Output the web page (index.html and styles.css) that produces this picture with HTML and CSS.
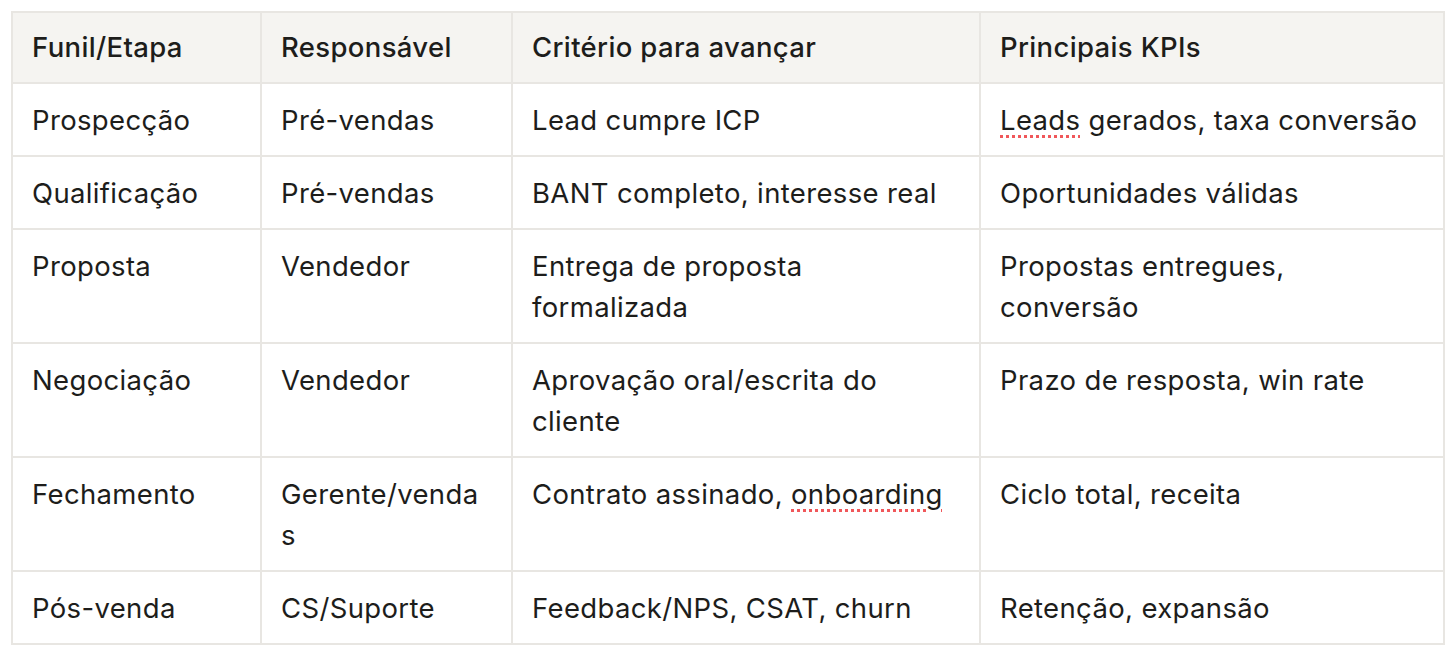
FILE: index.html
```html
<!DOCTYPE html>
<html lang="pt">
<head>
<meta charset="utf-8">
<link rel="stylesheet" href="styles.css">
</head>
<body>
<div class="wrap">
<table class="funnel">
  <colgroup>
    <col class="c1"><col class="c2"><col class="c3"><col class="c4">
  </colgroup>
  <thead>
    <tr><th>Funil/Etapa</th><th>Responsável</th><th>Critério para avançar</th><th>Principais KPIs</th></tr>
  </thead>
  <tbody>
    <tr><td>Prospecção</td><td>Pré-vendas</td><td>Lead cumpre ICP</td><td><span class="spell">Leads</span> gerados, taxa conversão</td></tr>
    <tr><td>Qualificação</td><td>Pré-vendas</td><td>BANT completo, interesse real</td><td>Oportunidades válidas</td></tr>
    <tr><td>Proposta</td><td>Vendedor</td><td>Entrega de proposta formalizada</td><td>Propostas entregues, conversão</td></tr>
    <tr><td>Negociação</td><td>Vendedor</td><td>Aprovação oral/escrita do cliente</td><td>Prazo de resposta, win rate</td></tr>
    <tr><td>Fechamento</td><td>Gerente/vendas</td><td>Contrato assinado, <span class="spell">onboarding</span></td><td>Ciclo total, receita</td></tr>
    <tr><td>Pós-venda</td><td>CS/Suporte</td><td>Feedback/NPS, CSAT, churn</td><td>Retenção, expansão</td></tr>
  </tbody>
</table>
</div>
</body>
</html>
```

FILE: styles.css
```css
html, body {
  margin: 0;
  padding: 0;
  background: #ffffff;
}
.wrap {
  padding: 11px 12px 0 11px;
}
.funnel {
  border-collapse: collapse;
  table-layout: fixed;
  width: 1433px;
  font-family: Inter, "Noto Sans", sans-serif;
  font-size: 27.5px;
  line-height: 41px;
  letter-spacing: 0.35px;
  color: #1d1d1b;
}
.c1 { width: 249px; }
.c2 { width: 251px; }
.c3 { width: 468px; }
.c4 { width: 464px; }
.funnel th, .funnel td {
  border: 2px solid #e8e6e2;
  padding: 16px 22px 14px 19px;
  text-align: left;
  vertical-align: top;
  font-weight: 400;
  overflow-wrap: anywhere;
}
.funnel thead th {
  background: #f5f4f1;
  font-weight: 500;
  padding-top: 14px;
}
.spell {
  text-decoration-line: underline;
  text-decoration-style: dotted;
  text-decoration-color: #f0575a;
  text-decoration-thickness: 3px;
  text-underline-offset: 5px;
}
```
